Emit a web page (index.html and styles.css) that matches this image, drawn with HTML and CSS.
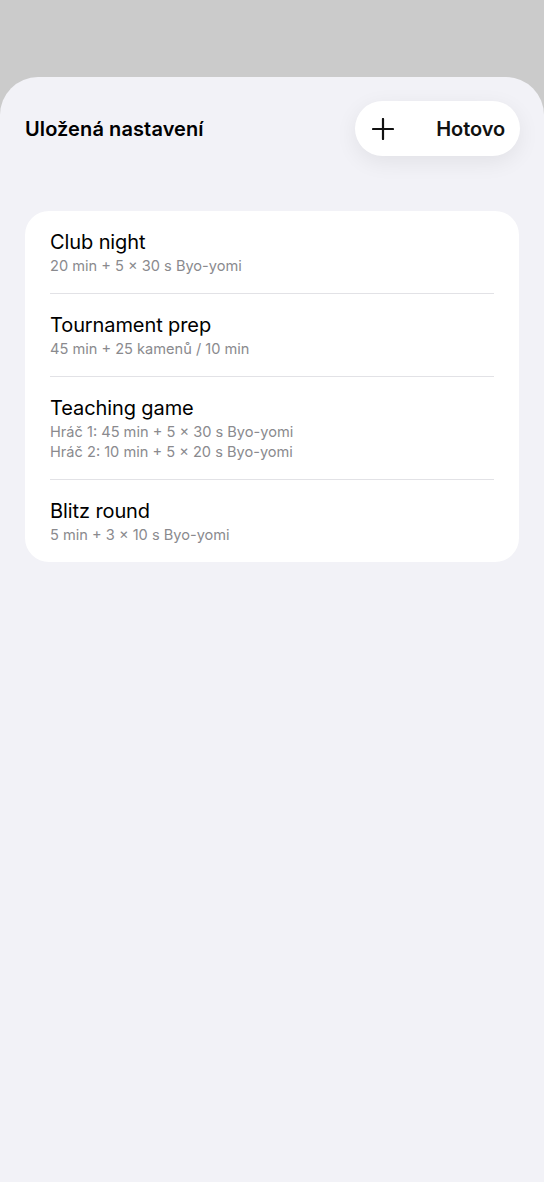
FILE: index.html
```html
<!DOCTYPE html>
<html lang="cs">
<head>
<meta charset="utf-8">
<title>Uložená nastavení</title>
<link rel="stylesheet" href="styles.css">
</head>
<body>
<div class="backdrop"></div>
<main class="sheet">
  <header class="sheet-header">
    <h1 class="sheet-title">Uložená nastavení</h1>
    <div class="pill">
      <button class="pill-btn plus" aria-label="Přidat">
        <svg width="22" height="22" viewBox="0 0 22 22"><path d="M11 1v20M1 11h20" stroke="#111" stroke-width="2.2" stroke-linecap="round" fill="none"/></svg>
      </button>
      <button class="pill-btn done">Hotovo</button>
    </div>
  </header>
  <section class="card">
    <div class="row">
      <div class="row-title">Club night</div>
      <div class="row-sub">20 min + 5 × 30 s Byo-yomi</div>
    </div>
    <div class="row">
      <div class="row-title">Tournament prep</div>
      <div class="row-sub">45 min + 25 kamenů / 10 min</div>
    </div>
    <div class="row">
      <div class="row-title">Teaching game</div>
      <div class="row-sub">Hráč 1: 45 min + 5 × 30 s Byo-yomi</div>
      <div class="row-sub tight">Hráč 2: 10 min + 5 × 20 s Byo-yomi</div>
    </div>
    <div class="row">
      <div class="row-title">Blitz round</div>
      <div class="row-sub">5 min + 3 × 10 s Byo-yomi</div>
    </div>
  </section>
</main>
</body>
</html>
```
FILE: styles.css
```css
html, body {
  margin: 0;
  padding: 0;
  background: #cbcbcb;
  font-family: Inter, "Noto Sans", "Liberation Sans", sans-serif;
  -webkit-font-smoothing: antialiased;
}
.backdrop {
  height: 77px;
}
.sheet {
  background: #f2f2f7;
  border-radius: 38px 38px 0 0;
  min-height: 1105px;
  box-sizing: border-box;
  padding: 24px 24px 0 25px;
}
.sheet-header {
  display: flex;
  align-items: center;
  justify-content: space-between;
  height: 55px;
}
.sheet-title {
  margin: 0;
  font-size: 20px;
  font-weight: 600;
  color: #000;
  letter-spacing: 0.1px;
}
.pill {
  display: flex;
  align-items: center;
  height: 55px;
  width: 165px;
  background: #fff;
  border-radius: 28px;
  box-shadow: 0 6px 22px rgba(0,0,0,0.07);
  box-sizing: border-box;
  padding: 0 15px 0 17px;
  justify-content: space-between;
}
.pill-btn {
  border: 0;
  background: none;
  padding: 0;
  font-family: inherit;
  color: #111;
  display: flex;
  align-items: center;
}
.done {
  font-size: 20px;
  font-weight: 600;
  letter-spacing: -0.1px;
}
.card {
  margin-top: 55px;
  background: #fff;
  border-radius: 24px;
  padding: 0 25px 0 25px;
  width: 494px;
  box-sizing: border-box;
}
.row {
  padding: 19px 0 17px;
  border-bottom: 1px solid #e2e2e6;
}
.row:last-child {
  border-bottom: 0;
}
.row-title {
  font-size: 20px;
  line-height: 24px;
  color: #000;
  letter-spacing: -0.1px;
}
.row-sub {
  margin-top: 2px;
  font-size: 14.6px;
  line-height: 20px;
  color: #8a8a8e;
}
.row-sub.tight {
  margin-top: 0;
}
```
